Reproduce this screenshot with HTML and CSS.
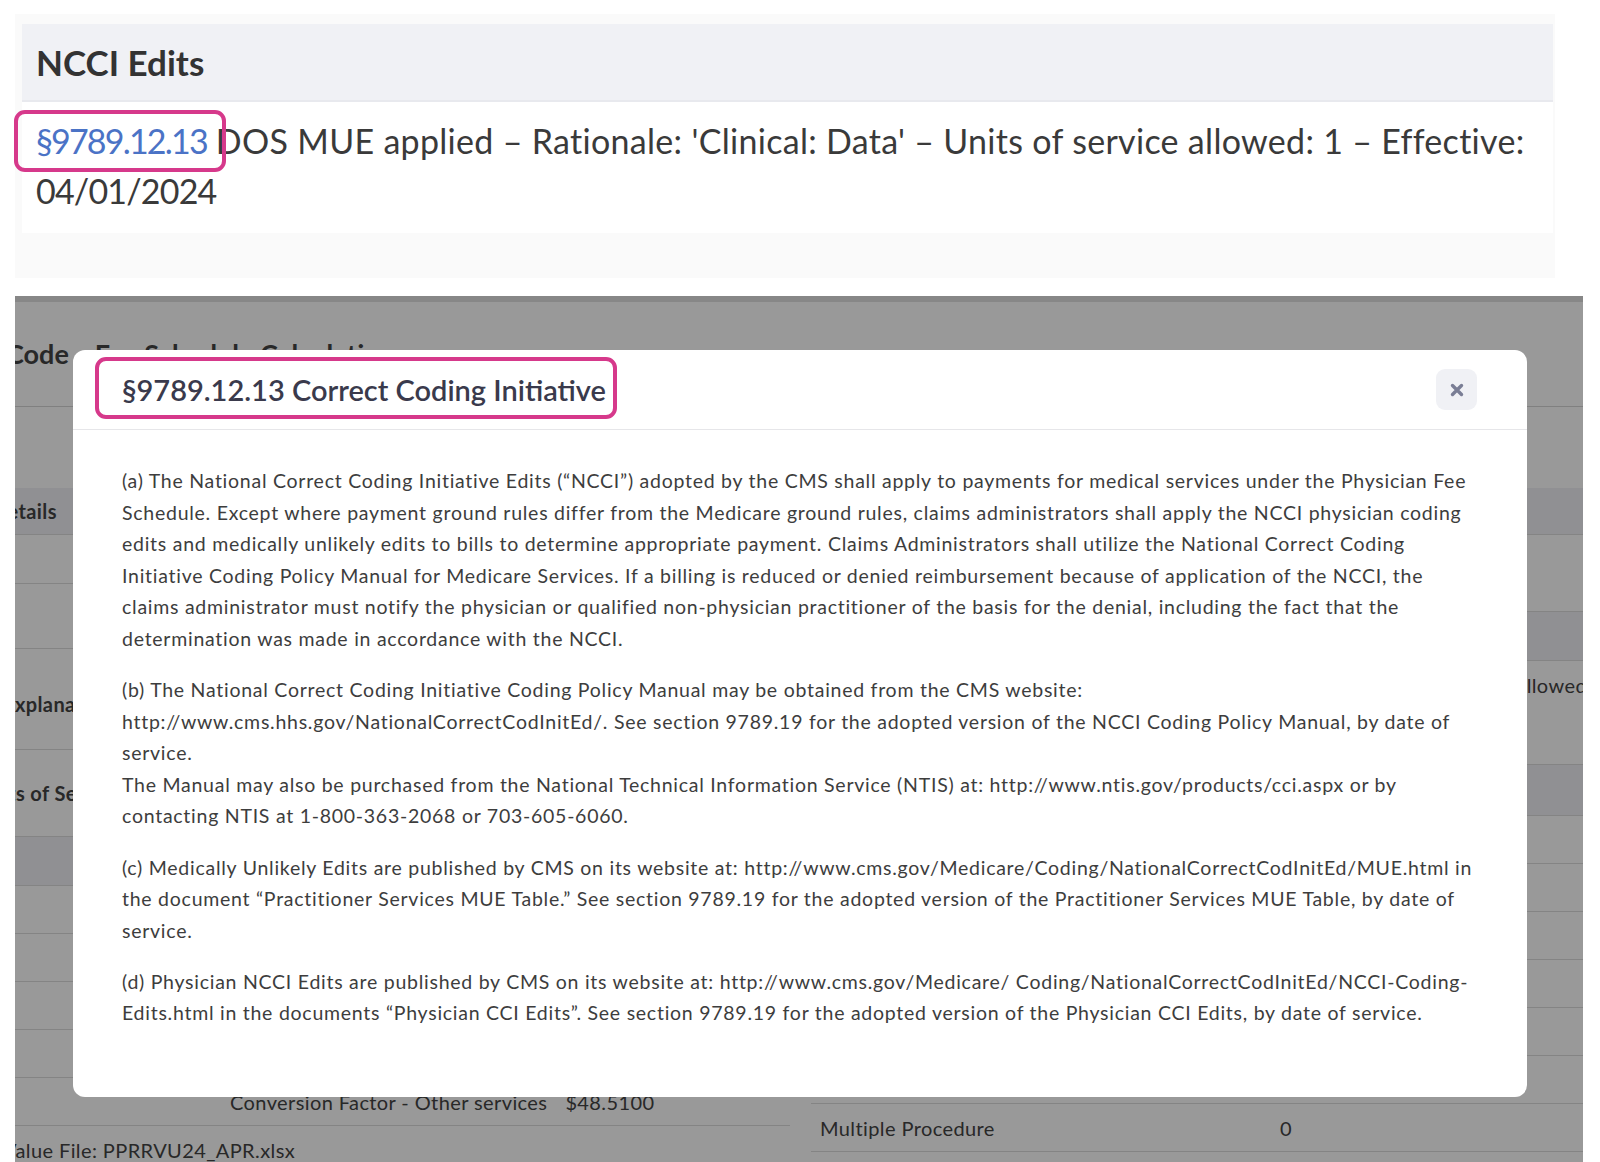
FILE: index.html
```html
<!DOCTYPE html>
<html lang="en">
<head>
<meta charset="UTF-8" />
<meta name="viewport" content="width=device-width, initial-scale=1.0" />
<title>NCCI Edits</title>
<link rel="stylesheet" href="styles.css">
</head>
<body>

<!-- edits panel from the line detail -->
<section class="ncci">
  <div class="ncci-card">
    <h2 class="ncci-title">NCCI Edits</h2>
    <p class="ncci-rule"><a class="ref mark" href="#">§9789.12.13</a> DOS MUE applied – Rationale: 'Clinical: Data' – Units of service allowed: 1 – Effective: <span class="date">04/01/2024</span></p>
  </div>
</section>

<!-- fee schedule screen with the regulation dialog open -->
<section class="screen">
  <div class="page">
    <div class="page-top"></div>
    <div class="tabs">
      <span class="tab">Code</span>
      <span class="tab">Fee Schedule Calculations</span>
    </div>
    <div class="cols">
      <div class="col">
        <div class="row band"><b class="cut-de">Details</b></div>
        <div class="row h49"></div>
        <div class="row h65"></div>
        <div class="row h101"><b class="cut-e">Explanation</b></div>
        <div class="row h87"><b class="cut-units">Units of Service</b></div>
        <div class="row band h49"></div>
        <div class="row"></div>
        <div class="row"></div>
        <div class="row"></div>
        <div class="row"></div>
        <div class="row calc"><span class="calc-label">Conversion Factor - Other services</span><span>$48.5100</span></div>
        <div class="row"><span class="cut-v">Value File: PPRRVU24_APR.xlsx</span></div>
      </div>
      <div class="col">
        <div class="row band"></div>
        <div class="row h77"></div>
        <div class="row band h49"></div>
        <div class="row h104 top"><span class="push">Allowed</span></div>
        <div class="row band h51"></div>
        <div class="row"></div>
        <div class="row"></div>
        <div class="row"></div>
        <div class="row"></div>
        <div class="row"></div>
        <div class="row"></div>
        <div class="row pair"><span class="pair-label">Multiple Procedure</span><span>0</span></div>
      </div>
    </div>
  </div>

  <div class="backdrop"></div>

  <div class="modal">
    <div class="modal-head">
      <h3 class="modal-title mark">§9789.12.13 Correct Coding Initiative</h3>
      <button class="close" type="button">
        <svg width="14" height="14" viewBox="0 0 14 14"><path d="M2.5 2.5l9 9M11.5 2.5l-9 9" stroke="#7a7e95" stroke-width="3.4" stroke-linecap="round"/></svg>
      </button>
    </div>
    <div class="modal-body">
      <p>(a) The National Correct Coding Initiative Edits (“NCCI”) adopted by the CMS shall apply to payments for medical services under the Physician Fee Schedule. Except where payment ground rules differ from the Medicare ground rules, claims administrators shall apply the NCCI physician coding edits and medically unlikely edits to bills to determine appropriate payment. Claims Administrators shall utilize the National Correct Coding Initiative Coding Policy Manual for Medicare Services. If a billing is reduced or denied reimbursement because of application of the NCCI, the claims administrator must notify the physician or qualified non-physician practitioner of the basis for the denial, including the fact that the determination was made in accordance with the NCCI.</p>
      <p>(b) The National Correct Coding Initiative Coding Policy Manual may be obtained from the CMS website: http://www.cms.hhs.gov/NationalCorrectCodInitEd/. See section 9789.19 for the adopted version of the NCCI Coding Policy Manual, by date of service.<br>The Manual may also be purchased from the National Technical Information Service (NTIS) at: http://www.ntis.gov/products/cci.aspx or by contacting NTIS at 1-800-363-2068 or 703-605-6060.</p>
      <p>(c) Medically Unlikely Edits are published by CMS on its website at: http://www.cms.gov/Medicare/Coding/NationalCorrectCodInitEd/MUE.html in the document “Practitioner Services MUE Table.” See section 9789.19 for the adopted version of the Practitioner Services MUE Table, by date of service.</p>
      <p>(d) Physician NCCI Edits are published by CMS on its website at: http://www.cms.gov/Medicare/ Coding/NationalCorrectCodInitEd/NCCI-Coding-Edits.html in the documents “Physician CCI Edits”. See section 9789.19 for the adopted version of the Physician CCI Edits, by date of service.</p>
    </div>
  </div>
</section>

</body>
</html>
```

FILE: styles.css
```css
* { box-sizing: border-box; }
html, body { margin: 0; height: 1162px; overflow: hidden; }
body { background: #fff; font-family: Lato, "Open Sans", Arial, sans-serif; color: #333; }

/* pink outline used to call out the section number */
.mark { position: relative; }
.mark::after { content: ""; position: absolute; border: 4px solid #d6398b; border-radius: 11px; pointer-events: none; }

/* NCCI edits panel */
.ncci { margin: 14px 0 0 15px; width: 1540px; padding: 10px 2px 45px 7px; background: #fafafa; }
.ncci-card { background: #fff; }
.ncci-title { margin: 0; height: 78px; padding: 0 14px; display: flex; align-items: center; background: #f0f1f5; border-bottom: 2px solid #e8e9ee; font-size: 35px; font-weight: 700; color: #333; }
.ncci-rule { margin: 0; height: 131px; padding: 14px 14px 0; font-size: 34px; line-height: 50px; letter-spacing: 0.3px; color: #3a3a3a; }
.ref { color: #4b73c6; text-decoration: none; letter-spacing: -1.8px; }
.ref.mark::after { left: -22px; right: -19px; top: -10px; bottom: -11px; }
.date { letter-spacing: -0.8px; }

/* dimmed fee schedule screen */
.screen { position: relative; margin: 18px 0 0 15px; width: 1568px; height: 866px; overflow: hidden; background: #fff; }
.page { font-size: 20px; letter-spacing: 0.4px; color: #444; }
.page-top { height: 6px; background: #e2e2e2; }
.tabs { display: flex; gap: 26px; height: 105px; padding-top: 35px; margin-left: -9px; border-bottom: 1px solid #d6d6d6; }
.tab { font-size: 27px; font-weight: 700; letter-spacing: 0; }
.cols { display: grid; grid-template-columns: 775px 772px; column-gap: 21px; padding-top: 81px; }
.row { height: 48px; display: flex; align-items: center; border-bottom: 1px solid #dcdcdc; }
.band { height: 47px; background: #f0f1f5; }
.row b { font-weight: 700; }
.h49 { height: 49px; }
.h51 { height: 51px; }
.h65 { height: 65px; }
.h77 { height: 77px; }
.h87 { height: 87px; }
.h101 { height: 101px; padding-top: 10px; }
.h104 { height: 104px; }
.top { align-items: flex-start; padding-top: 12px; }
.cut-de { margin-left: -23px; }
.cut-e { margin-left: -12px; }
.cut-units { margin-left: -39px; }
.cut-v { margin-left: -12px; }
.push { margin-left: auto; margin-right: -4px; }
.calc { padding-left: 215px; gap: 18px; }
.pair { padding-left: 9px; }
.pair-label { width: 460px; }

.backdrop { position: absolute; inset: 0; background: rgba(0,0,0,.4); }

/* regulation dialog */
.modal { position: absolute; left: 58px; top: 54px; width: 1454px; background: #fff; border-radius: 12px; }
.modal-head { height: 80px; display: flex; align-items: center; justify-content: space-between; padding: 0 50px 0 49px; border-bottom: 1px solid #e6e6e9; }
.modal-title { margin: 0; font-size: 29px; font-weight: 600; color: #3a3a4c; }
.modal-title.mark::after { left: -27px; right: -11px; top: -15px; bottom: -12px; }
.close { width: 41px; height: 41px; border: 0; border-radius: 9px; background: #f0f1f5; display: flex; align-items: center; justify-content: center; padding: 0; }
.modal-body { padding: 35px 49px 48px 49px; font-size: 19.5px; line-height: 31.6px; letter-spacing: 0.74px; color: #3d3d3d; }
.modal-body p { margin: 0 0 19.5px; }
```
